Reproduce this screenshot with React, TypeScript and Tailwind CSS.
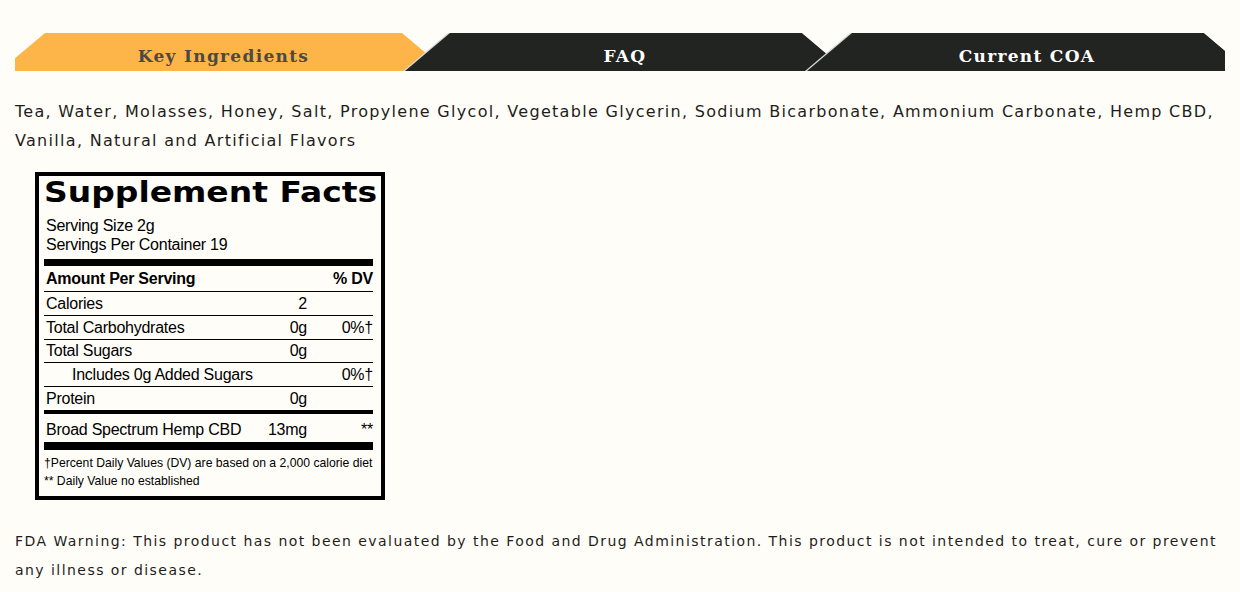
import React from "react";

const tabs = [
  { label: "Key Ingredients", width: "w-[447px]", offset: "", active: true },
  { label: "FAQ", width: "w-[444px]", offset: "-ml-[44px]", active: false },
  { label: "Current COA", width: "w-[444px]", offset: "-ml-[42px]", active: false },
];

const tabShape = "[clip-path:polygon(0_100%,45px_0,calc(100%-45px)_0,100%_100%)]";
const tabInner = "[clip-path:polygon(2px_100%,47px_0,calc(100%-45px)_0,100%_100%)]";

const Tabs = () => {
  return (
    <div className="px-[15px] pt-[33px]">
      <div className="h-[38px] overflow-hidden">
        <div className="-ml-[15px] flex w-[1260px]">
          {tabs.map((tab, i) => (
            <div
              key={tab.label}
              className={`relative h-[38px] shrink-0 ${tab.width} ${tab.offset} ${tabShape} ${
                tab.active ? "bg-[#fdb448]" : "bg-[#d9d8d2]"
              }`}
              style={{ zIndex: i + 1 }}>
              <div
                className={`absolute inset-0 ${tab.active ? "" : `bg-[#222421] ${tabInner}`}`}
              />
              <div
                className={`relative h-[38px] pt-[8px] text-center text-[17px] leading-[30px] font-bold tracking-[1.3px] ${
                  tab.active ? "text-[#4b4944]" : "text-white"
                }`}
                style={{ fontFamily: '"DejaVu Serif", serif' }}>
                {tab.label}
              </div>
            </div>
          ))}
        </div>
      </div>
    </div>
  );
};

interface RowProps {
  label: string;
  value?: string;
  dv?: string;
  indent?: boolean;
  className: string;
}

const Row = ({ label, value, dv, indent, className }: RowProps) => {
  return (
    <div className={`flex border-black ${className}`}>
      <span className={`flex-1 whitespace-nowrap ${indent ? "pl-[28px]" : "pl-[2px]"}`}>{label}</span>
      <span className="w-[50px] text-right">{value}</span>
      <span className="w-[66px] text-right">{dv}</span>
    </div>
  );
};

const SupplementFacts = () => {
  return (
    <div
      className="ml-[20px] mt-[17px] h-[328px] w-[350px] border-4 border-black pl-[5px] pr-[8px] pt-[2px] text-[16px] tracking-[-0.25px] text-black"
      style={{ fontFamily: '"Liberation Sans", Arial, sans-serif' }}>
      <div
        className="h-[30px] origin-left scale-x-[1.177] whitespace-nowrap text-[28px] leading-[30px] font-bold tracking-normal"
        style={{ fontFamily: '"DejaVu Sans", sans-serif' }}>
        Supplement Facts
      </div>
      <div className="mt-[8px] pl-[2px] leading-[19px]">
        <div>Serving Size 2g</div>
        <div>Servings Per Container 19</div>
      </div>
      <div className="mt-[5px] h-[7px] bg-black" />
      <div className="flex h-[26px] border-b border-black pl-[2px] leading-[26px] font-bold">
        <span className="flex-1">Amount Per Serving</span>
        <span>% DV</span>
      </div>
      <Row label="Calories" value="2" className="h-[24px] border-b leading-[23px]" />
      <Row label="Total Carbohydrates" value="0g" dv="0%†" className="h-[24px] border-b leading-[23px]" />
      <Row label="Total Sugars" value="0g" className="h-[23px] border-b leading-[22px]" />
      <Row label="Includes 0g Added Sugars" dv="0%†" indent className="h-[24px] border-b leading-[23px]" />
      <Row label="Protein" value="0g" className="h-[27px] border-b-4 leading-[23px]" />
      <Row label="Broad Spectrum Hemp CBD" value="13mg" dv="**" className="h-[28px] leading-[32px]" />
      <div className="h-[8px] bg-black" />
      <div className="mt-[3.5px] text-[12.2px] leading-[18px] tracking-normal">
        <div>†Percent Daily Values (DV) are based on a 2,000 calorie diet</div>
        <div>** Daily Value no established</div>
      </div>
    </div>
  );
};

export default function App() {
  return (
    <div
      className="min-h-[592px] w-full bg-[#fffdf8] text-[#1f1d1c]"
      style={{ fontFamily: '"DejaVu Sans", sans-serif' }}>
      <Tabs />
      <div className="px-[15px]">
        <p className="-mr-[10px] mt-[26px] text-[16px] leading-[29px] tracking-[1.3px]">
          Tea, Water, Molasses, Honey, Salt, Propylene Glycol, Vegetable Glycerin, Sodium Bicarbonate, Ammonium
          Carbonate, Hemp CBD, Vanilla, Natural and Artificial Flavors
        </p>
        <SupplementFacts />
        <p className="mt-[27px] text-[14px] leading-[29px] tracking-[1.45px]">
          FDA Warning: This product has not been evaluated by the Food and Drug Administration. This product is not
          intended to treat, cure or prevent any illness or disease.
        </p>
      </div>
    </div>
  );
}
